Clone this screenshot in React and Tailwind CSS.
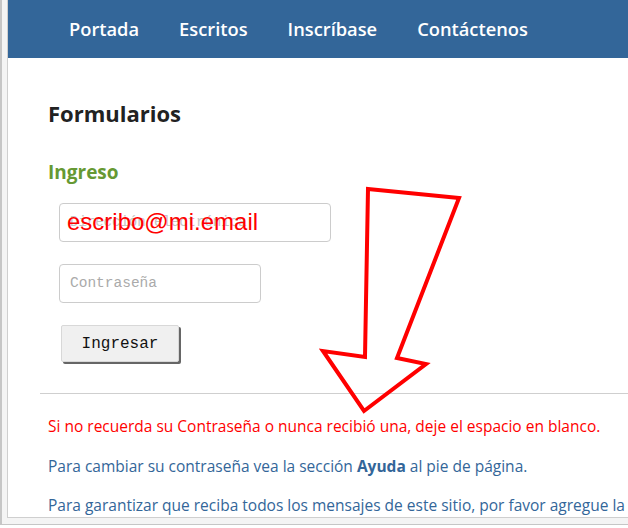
import React from "react";

export default function App() {
  return (
    <div className="relative w-[628px] h-[528px] overflow-hidden bg-white font-['Open_Sans',sans-serif]">
      <div className="border-l-2 border-b border-[#c6c6c6] bg-[#f4f4f4] pl-[5px] pb-[6px]">
        <div className="border-l border-b border-[#cfcfcf] bg-white h-[518px] overflow-hidden">
          <nav className="h-[58px] bg-[#336699] flex items-center pl-[61px] gap-[40px] text-white font-semibold text-[18.3px] pb-[1px]">
            <span>Portada</span>
            <span>Escritos</span>
            <span>Inscríbase</span>
            <span>Contáctenos</span>
          </nav>
          <div className="pl-[40px]">
            <h1 className="pt-[40px] text-[22px] leading-[30px] font-bold text-[#222]">Formularios</h1>
            <h2 className="mt-[31px] text-[19px] leading-[26px] font-bold text-[#669933]">Ingreso</h2>
            <div className="ml-[11px] mt-[18px] relative w-[272px] h-[39px] border border-[#cccccc] rounded-[4px] flex items-center pl-[10px]">
              <span className="font-['Liberation_Mono',monospace] text-[14px] text-[#c4c4c4]">Dirección electrónica</span>
              <span className="absolute left-[7px] top-[4px] font-['Liberation_Sans',Arial,sans-serif] text-[24px] leading-[28px] text-[#ff0000]">escribo@mi.email</span>
            </div>
            <div className="ml-[11px] mt-[22px] w-[202px] h-[39px] border border-[#cccccc] rounded-[4px] flex items-center pl-[10px]">
              <span className="font-['Liberation_Mono',monospace] text-[14.5px] text-[#aaaaaa]">Contraseña</span>
            </div>
            <div className="ml-[13px] mt-[22px] w-[118px] h-[37px] bg-[#f0f0f0] border border-[#d8d8d8] rounded-[2px] shadow-[2px_2px_0_#666] flex items-center justify-center">
              <span className="font-['Liberation_Mono',monospace] text-[16px] text-[#111]">Ingresar</span>
            </div>
          </div>
          <div className="ml-[32px] mt-[31px] border-t border-[#cfcfcf]"></div>
          <div className="pl-[40px] text-[15.5px] leading-[20px] whitespace-nowrap">
            <p className="mt-[22px] text-[#ff0000]">Si no recuerda su Contraseña o nunca recibió una, deje el espacio en blanco.</p>
            <p className="mt-[20px] text-[#336699]">Para cambiar su contraseña vea la sección <b>Ayuda</b> al pie de página.</p>
            <p className="mt-[19px] text-[#336699]">Para garantizar que reciba todos los mensajes de este sitio, por favor agregue la</p>
          </div>
        </div>
      </div>
      <div className="h-[4px] overflow-hidden text-center text-[11px] leading-[14px] text-[#c8c8c8] font-['Liberation_Sans',sans-serif]">
        Todos los derechos reservados. Condiciones de uso y privacidad.
      </div>
      <svg className="absolute left-0 top-0 pointer-events-none" width="628" height="528" viewBox="0 0 628 528">
        <polygon
          points="368,189 459,198 397,358 426,364 364,411 323,351 365,357"
          fill="none"
          stroke="#ff0000"
          strokeWidth="4"
          strokeLinejoin="miter"
        />
      </svg>
    </div>
  );
}
